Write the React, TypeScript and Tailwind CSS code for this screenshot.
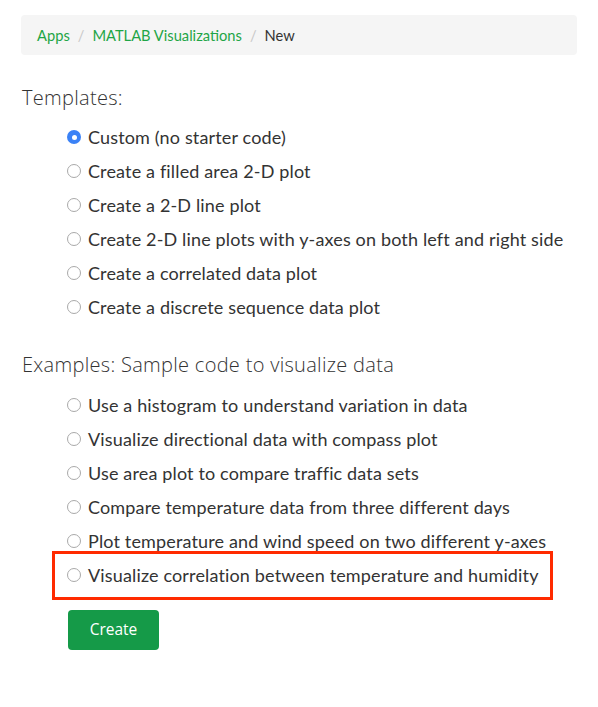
const TEMPLATES = [
  "Custom (no starter code)",
  "Create a filled area 2-D plot",
  "Create a 2-D line plot",
  "Create 2-D line plots with y-axes on both left and right side",
  "Create a correlated data plot",
  "Create a discrete sequence data plot",
];

const EXAMPLES = [
  "Use a histogram to understand variation in data",
  "Visualize directional data with compass plot",
  "Use area plot to compare traffic data sets",
  "Compare temperature data from three different days",
  "Plot temperature and wind speed on two different y-axes",
  "Visualize correlation between temperature and humidity",
];

const body = { fontFamily: "Lato, 'Liberation Sans', sans-serif" };
const heading = { fontFamily: "'Open Sans', Lato, sans-serif" };

function Radio({ checked }: { checked?: boolean }) {
  if (checked) {
    return (
      <span className="flex h-[14px] w-[14px] shrink-0 items-center justify-center rounded-full bg-[#3b82f6]">
        <span className="h-[5px] w-[5px] rounded-full bg-white" />
      </span>
    );
  }
  return <span className="h-[14px] w-[14px] shrink-0 rounded-full border border-[#a9a9a9] bg-white" />;
}

function Option({ label, checked, highlight }: { label: string; checked?: boolean; highlight?: boolean }) {
  return (
    <div className="flex h-[34px] items-center">
      <label className="relative inline-flex items-center gap-[7px] text-[18px] tracking-[0.15px] text-[#333]">
        <Radio checked={checked} />
        <span>{label}</span>
        {highlight && (
          <span className="pointer-events-none absolute -left-[15px] -right-[14px] -top-[11px] -bottom-[11px] border-[3px] border-[#ff2a00]" />
        )}
      </label>
    </div>
  );
}

export default function App() {
  return (
    <div className="min-h-[707px] bg-white pt-[15px]" style={body}>
      <nav className="mx-[21px] flex h-[40px] items-center rounded-[4px] bg-[#f5f5f5] px-[16px] text-[14.7px]">
        <a className="text-[#1fa547]">Apps</a>
        <span className="px-[8px] text-[#c8c8c8]">/</span>
        <a className="text-[#1fa547]">MATLAB Visualizations</a>
        <span className="px-[8px] text-[#c8c8c8]">/</span>
        <span className="text-[#333]">New</span>
      </nav>

      <section className="px-[22px] pt-[29px]">
        <h2 className="text-[20px] font-light leading-[27px] tracking-[0.3px] text-[#333]" style={heading}>
          Templates:
        </h2>
        <div className="mt-[9px] pl-[45px]">
          {TEMPLATES.map((t, i) => (
            <Option key={t} label={t} checked={i === 0} />
          ))}
        </div>

        <h2 className="mt-[27px] text-[20px] font-light leading-[27px] tracking-[0.3px] text-[#333]" style={heading}>
          Examples: Sample code to visualize data
        </h2>
        <div className="mt-[10px] pl-[45px]">
          {EXAMPLES.map((t, i) => (
            <Option key={t} label={t} highlight={i === EXAMPLES.length - 1} />
          ))}
        </div>

        <button
          className="ml-[46px] mt-[18px] h-[40px] w-[91px] rounded-[4px] bg-[#159a48] text-[15.5px] text-white"
          style={heading}
        >
          Create
        </button>
      </section>
    </div>
  );
}
